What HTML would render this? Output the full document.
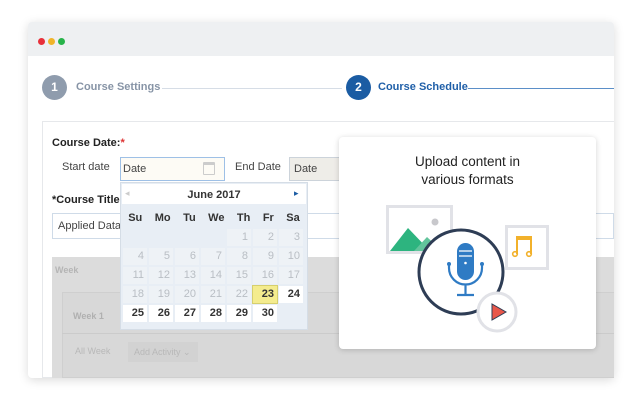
<!DOCTYPE html>
<html><head><meta charset="utf-8"><style>
*{box-sizing:border-box;margin:0;padding:0}
body{width:640px;height:410px;background:#fff;font-family:"Liberation Sans",sans-serif;position:relative;overflow:hidden}
.a{position:absolute}
.win{left:28px;top:22px;width:586px;height:356px;background:#fff;border-radius:4px;box-shadow:0 2px 10px rgba(0,0,0,.15);overflow:hidden}
.bar{left:0;top:0;width:586px;height:34px;background:#eef0f2}
.dot{width:7px;height:7px;border-radius:50%;top:16px}
.b{font-weight:bold}
.cell{position:absolute;width:24px;height:17px;font-size:11px;text-align:right;padding-right:3px;line-height:17px}
.g{color:#b9bec4;background:#eef2f6}
.w{color:#333;background:#fff;font-weight:bold}
</style></head><body>
<div class="a win">
 <div class="a bar"></div>
 <div class="a dot" style="left:10px;background:#e8303a"></div>
 <div class="a dot" style="left:20px;background:#f0b429"></div>
 <div class="a dot" style="left:30px;background:#27b34a"></div>
</div>
<div class="a" style="left:42px;top:75px;width:25px;height:25px;border-radius:50%;background:#8f9cad;color:#fff;font-size:12px;font-weight:bold;text-align:center;line-height:25px">1</div>
<div class="a b" style="left:76px;top:81px;font-size:11px;color:#8794a6">Course Settings</div>
<div class="a" style="left:162px;top:88px;width:180px;height:1px;background:#d6dde6"></div>
<div class="a" style="left:346px;top:75px;width:25px;height:25px;border-radius:50%;background:#1b5ca3;color:#fff;font-size:12px;font-weight:bold;text-align:center;line-height:25px">2</div>
<div class="a b" style="left:378px;top:81px;font-size:11px;color:#1f5fa8">Course Schedule</div>
<div class="a" style="left:468px;top:88px;width:146px;height:1px;background:#5b8fc8"></div>
<div class="a" style="left:42px;top:121px;width:572px;height:257px;border:1px solid #e6e8eb;border-right:none"></div>
<div class="a b" style="left:52px;top:137px;font-size:11px;color:#222">Course Date:<span style="color:#d33">*</span></div>
<div class="a" style="left:62px;top:161px;font-size:11px;color:#444">Start date</div>
<div class="a" style="left:120px;top:157px;width:105px;height:24px;border:1px solid #9ec0e6;background:#fdfbf5;font-size:11px;color:#444;padding:5px 0 0 2px">Date</div>
<div class="a" style="left:203px;top:162px;width:12px;height:13px;border:1px solid #ccc;border-top:3px solid #ccc;border-radius:1px"></div>
<div class="a" style="left:235px;top:161px;font-size:11px;color:#444">End Date</div>
<div class="a" style="left:289px;top:157px;width:60px;height:24px;border:1px solid #ccd3da;background:#eeede8;font-size:11px;color:#444;padding:5px 0 0 4px">Date</div>
<div class="a b" style="left:52px;top:194px;font-size:11px;color:#222">*Course Title:</div>
<div class="a" style="left:52px;top:213px;width:562px;height:26px;border:1px solid #cfdbe8;font-size:11px;color:#444;padding:6px 0 0 5px">Applied Data</div>
<div class="a" style="left:52px;top:257px;width:562px;height:121px;background:#dcdcdc"></div>
<div class="a b" style="left:55px;top:265px;font-size:9px;color:#b5b5b5">Week</div>
<div class="a" style="left:62px;top:292px;width:552px;height:86px;border:1px solid #cfcfcf;border-right:none;background:#d8d8d8"></div>
<div class="a" style="left:62px;top:333px;width:552px;height:1px;background:#cbcbcb"></div>
<div class="a b" style="left:73px;top:311px;font-size:9px;color:#b0b0b0">Week 1</div>
<div class="a" style="left:75px;top:346px;font-size:9px;color:#b8b8b8">All Week</div>
<div class="a" style="left:128px;top:342px;width:70px;height:20px;background:#d2d2d2;font-size:9px;color:#b8b8b8;padding:5px 0 0 6px">Add Activity ⌄</div>
<div class="a" style="left:120px;top:182px;width:188px;height:148px;background:#e8eef5;border:1px solid #d5dde6"></div>
<div class="a" style="left:122px;top:184px;width:184px;height:20px;background:#fff"></div>
<div class="a b" style="left:120px;top:189px;width:188px;text-align:center;font-size:11px;color:#333">June 2017</div>
<div class="a" style="left:125px;top:188px;font-size:9px;color:#ccc">◂</div>
<div class="a" style="left:294px;top:188px;font-size:9px;color:#1b5ca3">▸</div>
<div class="a b" style="left:122px;top:212px;width:184px;font-size:11px;color:#333;display:flex;justify-content:space-around"><span>Su</span><span>Mo</span><span>Tu</span><span>We</span><span>Th</span><span>Fr</span><span>Sa</span></div>
<div id="cal"></div>
<div class="a" style="left:339px;top:137px;width:257px;height:212px;background:#fff;border-radius:4px;box-shadow:0 1px 6px rgba(0,0,0,.18)"></div>
<div class="a" style="left:339px;top:153px;width:257px;text-align:center;font-size:13.5px;line-height:18px;color:#222">Upload content in<br>various formats</div>
<svg class="a" style="left:380px;top:200px" width="180" height="140" viewBox="380 200 180 140">
 <rect x="387.5" y="206.5" width="64" height="46" fill="#fff" stroke="#e1e2e7" stroke-width="3"/>
 <polygon points="390,251 408,228 430,251" fill="#2db47f"/>
 <polygon points="414,251 427,237 442,251" fill="#62c49c"/>
 <circle cx="435" cy="222" r="3.5" fill="#c8c8cc"/>
 <rect x="506.5" y="226.5" width="41" height="42" fill="#fff" stroke="#e1e2e7" stroke-width="3"/>
 <path d="M517 254V237h14v17M517 239h14" fill="none" stroke="#f2b12b" stroke-width="2"/>
 <circle cx="515" cy="254" r="2.3" fill="none" stroke="#f2b12b" stroke-width="1.6"/>
 <circle cx="529" cy="254" r="2.3" fill="none" stroke="#f2b12b" stroke-width="1.6"/>
 <circle cx="461" cy="272" r="42" fill="#fff" stroke="#2e3d55" stroke-width="3"/>
 <rect x="457" y="243" width="17" height="37" rx="8.5" fill="#2f7bc4"/>
 <path d="M459 251h13M459 256h13" stroke="#fff" stroke-width="1.3"/>
 <circle cx="465.5" cy="263" r="1.3" fill="#fff"/>
 <path d="M449 265v3a16.5 16.5 0 0 0 33 0v-3M465.5 285v10M457 295h17" fill="none" stroke="#2f7bc4" stroke-width="2.2"/>
 <circle cx="449" cy="264" r="2" fill="#2f7bc4"/><circle cx="482" cy="264" r="2" fill="#2f7bc4"/>
 <circle cx="497" cy="312" r="19" fill="#fff" stroke="#e1e2e7" stroke-width="3"/>
 <polygon points="492,304 492,320 506,312" fill="#e8574a" stroke="#2e3d55" stroke-width="1"/>
</svg>
<script>
var h='',x0=123,dx=26,ys=[229,248,267,286,305];
for(var d=1;d<=30;d++){var i=d+3,r=Math.floor(i/7),c=i%7,cls=d<23?'g':'w',st='';
if(d==23)st='background:#f4ec8e;outline:1px solid #d6cf6e;';
h+='<div class="cell '+cls+'" style="left:'+(x0+c*dx)+'px;top:'+ys[r]+'px;'+st+'">'+d+'</div>';}
document.getElementById('cal').innerHTML=h;
</script>
</body></html>
